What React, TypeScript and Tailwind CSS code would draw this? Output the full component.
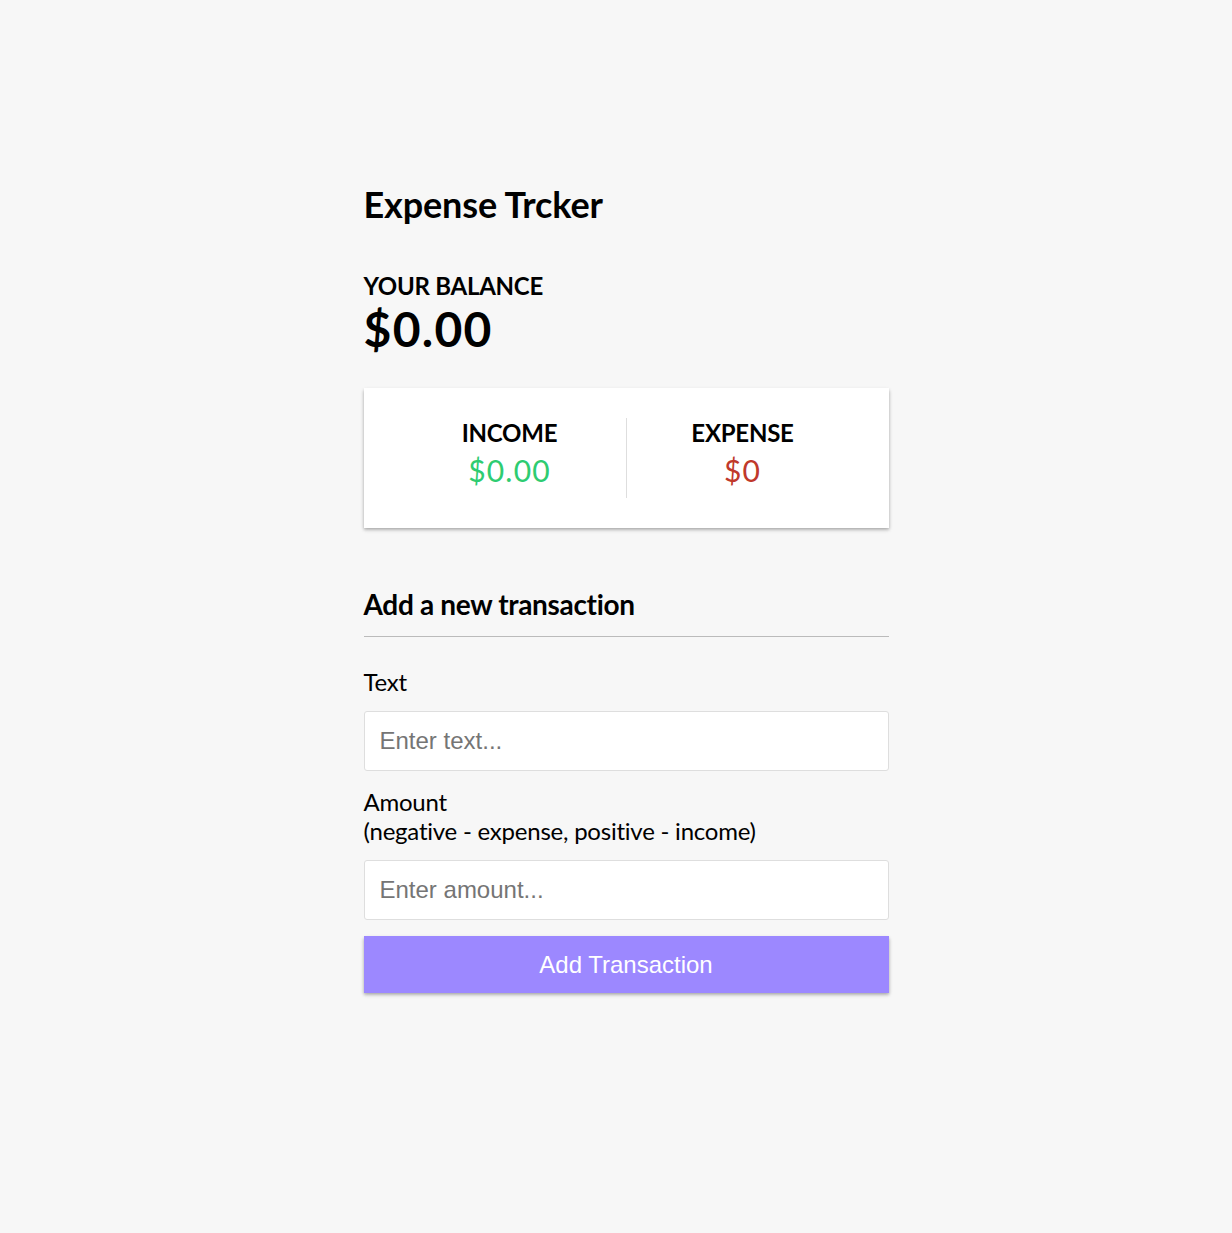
import React from "react";

export default function App() {
  return (
    <div className="flex min-h-screen justify-center bg-[#f7f7f7] pl-[20px] font-['Lato',sans-serif] text-black">
      <div className="w-[525px] pt-[183px] pb-[200px]">
        <h2 className="m-0 text-[36px] font-bold leading-[43px] tracking-[-0.15px]">Expense Trcker</h2>
        <div className="mt-[45px]">
          <h4 className="m-0 text-[24px] font-bold uppercase leading-[29px] tracking-[-0.25px]">Your Balance</h4>
          <h1 className="m-0 text-[48px] font-bold leading-[58px] tracking-[1.3px]">$0.00</h1>

          <div className="my-[30px] flex justify-between bg-white p-[30px] shadow-[0_1.5px_4.5px_rgba(0,0,0,0.12),0_1.5px_3px_rgba(0,0,0,0.24)]">
            <div className="flex-1 border-r-[1.5px] border-[#dedede] text-center">
              <h4 className="m-0 text-[24px] font-bold uppercase leading-[29px] tracking-[-0.25px]">Income</h4>
              <p className="mt-[5px] mb-[10px] text-[30px] leading-[36px] tracking-[1.2px] text-[#2ecc71]">$0.00</p>
            </div>
            <div className="flex-1 text-center">
              <h4 className="m-0 text-[24px] font-bold uppercase leading-[29px] tracking-[-0.25px]">Expense</h4>
              <p className="mt-[5px] mb-[10px] text-[30px] leading-[36px] tracking-[1.2px] text-[#c0392b]">$0</p>
            </div>
          </div>

          <h3 className="mt-[60px] mb-[15px] border-b-[1.5px] border-[#bbb] pt-0 pb-[16px] text-[28px] font-bold leading-[32px] tracking-[-0.33px]">
            Add a new transaction
          </h3>
          <form onSubmit={(e) => e.preventDefault()}>
            <div>
              <label className="my-[15px] inline-block text-[24px] leading-[29px] tracking-[-0.2px]">Text</label>
              <input
                type="text"
                placeholder="Enter text..."
                className="block h-[60px] w-full rounded-[3px] border-[1.5px] border-[#dedede] bg-white px-[15px] font-['Liberation_Sans',Arial,sans-serif] text-[24px] placeholder:text-[#757575] outline-none"
              />
            </div>
            <div>
              <label className="mt-[16px] mb-[15px] inline-block text-[24px] leading-[29px] tracking-[-0.23px]">
                Amount <br />
                (negative - expense, positive - income)
              </label>
              <input
                type="number"
                placeholder="Enter amount..."
                className="block h-[60px] w-full rounded-[3px] border-[1.5px] border-[#dedede] bg-white px-[15px] font-['Liberation_Sans',Arial,sans-serif] text-[24px] placeholder:text-[#757575] outline-none"
              />
            </div>
            <button
              type="submit"
              className="mt-[16px] mb-[45px] block h-[57px] w-full cursor-pointer border-0 bg-[#9c88ff] font-['Liberation_Sans',Arial,sans-serif] text-[24px] text-white shadow-[0_1.5px_4.5px_rgba(0,0,0,0.12),0_1.5px_3px_rgba(0,0,0,0.24)]"
            >
              Add Transaction
            </button>
          </form>
        </div>
      </div>
    </div>
  );
}
